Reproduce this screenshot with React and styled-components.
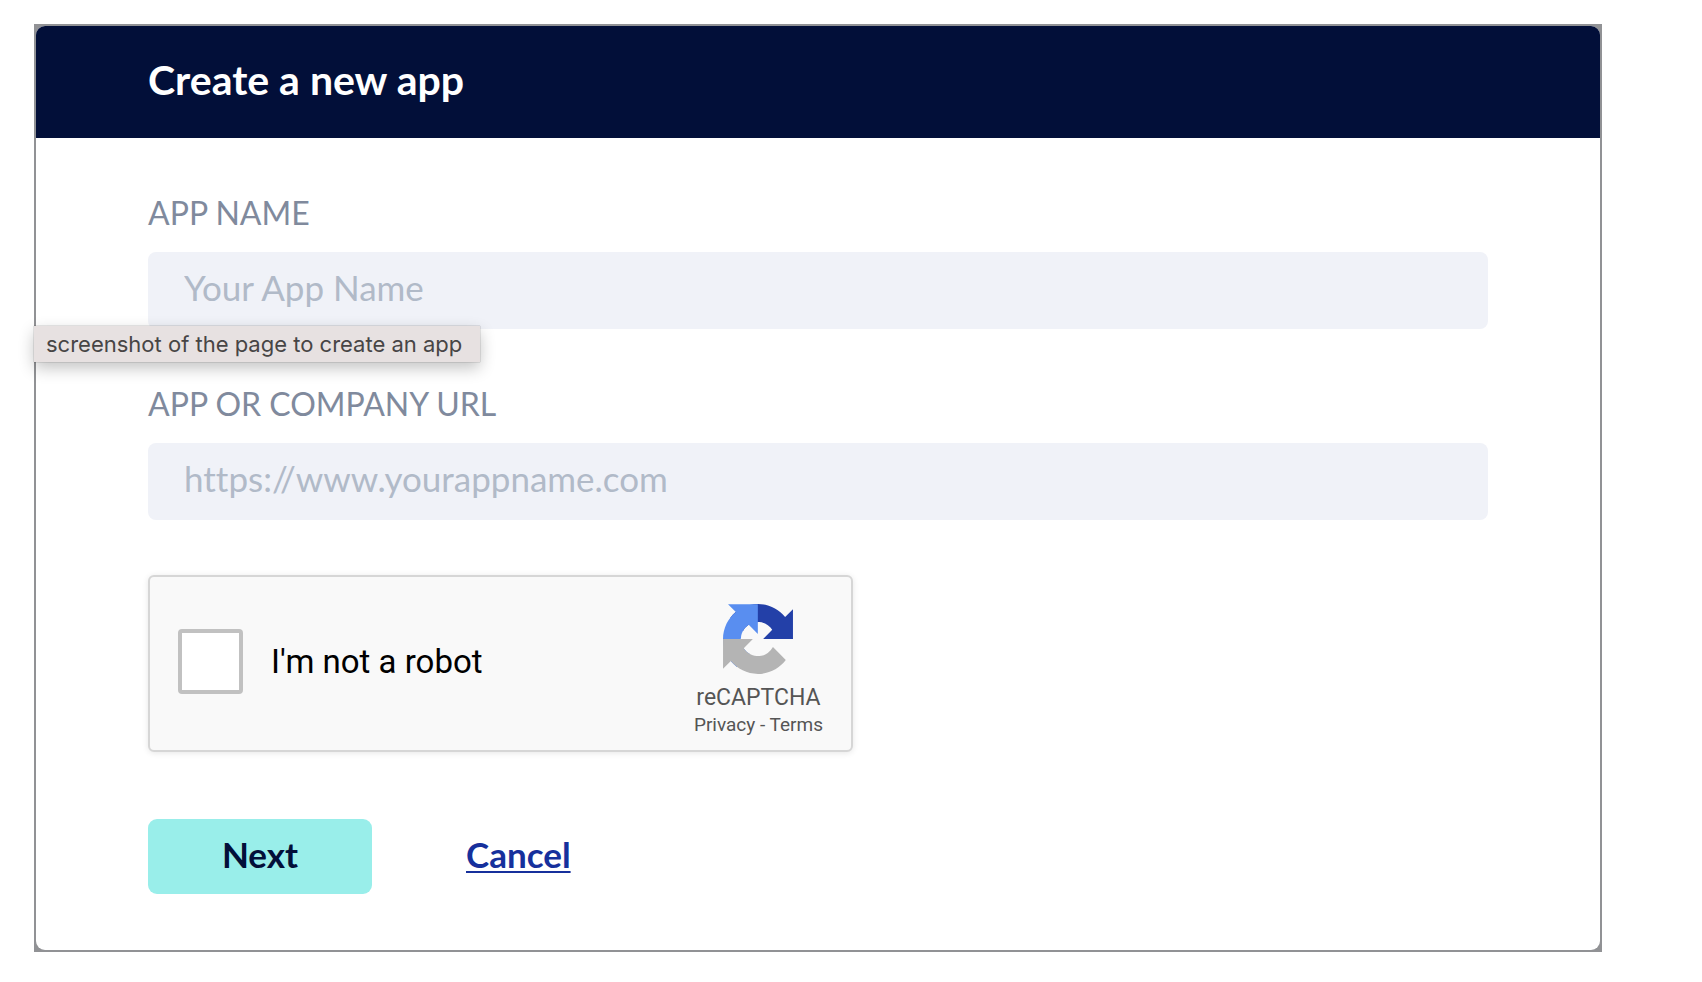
import React from "react";
import styled, { createGlobalStyle } from "styled-components";

const GlobalStyle = createGlobalStyle`
  *, *::before, *::after { box-sizing: border-box; }
  body {
    margin: 0;
    background: #fff;
    font-family: Lato, "Liberation Sans", sans-serif;
    font-variant-ligatures: none;
  }
`;

const Page = styled.main`
  padding: 24px 100px 28px 34px;
`;

const Frame = styled.div`
  position: relative;
  padding: 2px;
  background: #919295;
`;

const Card = styled.section`
  overflow: hidden;
  border-radius: 9px;
  background: #fff;
`;

const Header = styled.header`
  display: flex;
  align-items: center;
  height: 112px;
  padding: 0 112px 4px;
  background: #020f39;
`;

const Title = styled.h1`
  margin: 0;
  color: #fff;
  font-size: 41px;
  line-height: 48px;
  font-weight: 700;
`;

const Form = styled.form`
  display: flex;
  flex-direction: column;
  gap: 55px;
  padding: 55px 112px 56px;
`;

const Field = styled.div`
  display: flex;
  flex-direction: column;
  gap: 19px;
`;

const Label = styled.label`
  color: #808a9d;
  font-size: 32px;
  line-height: 40px;
  text-transform: uppercase;
`;

const TextInput = styled.input`
  width: 100%;
  height: 77px;
  padding: 0 36px 8px;
  border: 0;
  border-radius: 8px;
  background: #f0f2f8;
  color: #020f39;
  font-family: inherit;
  font-size: 35px;
  font-variant-ligatures: inherit;

  &::placeholder {
    color: #b1bac8;
    opacity: 1;
  }
`;

const Captcha = styled.div`
  display: flex;
  align-items: center;
  justify-content: space-between;
  width: 705px;
  max-width: 100%;
  height: 177px;
  padding: 0 28px 4px;
  border: 2px solid #d6d6d6;
  border-radius: 6px;
  background: #f9f9f9;
  box-shadow: 0 1px 6px rgba(0, 0, 0, 0.1);
  font-family: Roboto, "Liberation Sans", sans-serif;
`;

const CheckLabel = styled.label`
  display: flex;
  align-items: center;
  gap: 28px;
  color: #000;
  font-size: 33px;
  line-height: 40px;
`;

const Checkbox = styled.input`
  appearance: none;
  width: 65px;
  height: 65px;
  margin: 0;
  border: 4px solid #c1c1c1;
  border-radius: 4px;
  background: #fff;
`;

const Brand = styled.div`
  display: flex;
  flex-direction: column;
  align-items: center;
  padding-top: 18px;
  color: #555;
`;

const Logo = styled.svg`
  display: block;
  width: 70px;
  height: 70px;
  margin-bottom: 10px;
`;

const BrandName = styled.span`
  font-size: 23px;
  line-height: 28px;
`;

const BrandLinks = styled.span`
  font-size: 19px;
  line-height: 26px;

  a {
    color: inherit;
    text-decoration: none;
  }
`;

const Actions = styled.div`
  display: flex;
  align-items: center;
  gap: 94px;
  padding-top: 12px;
`;

const NextButton = styled.button`
  width: 224px;
  height: 75px;
  padding: 0 0 6px;
  border: 0;
  border-radius: 9px;
  background: #99eeea;
  color: #020f39;
  font-family: inherit;
  font-size: 35px;
  font-weight: 700;
`;

const CancelLink = styled.a`
  padding-bottom: 6px;
  color: #16309c;
  font-size: 35px;
  line-height: 40px;
  font-weight: 700;
  text-decoration: underline;
  text-decoration-thickness: 2px;
  text-underline-offset: 3px;
`;

const Tooltip = styled.div`
  position: absolute;
  top: 302px;
  left: 0;
  padding: 0 18px 0 12px;
  background: #e7e1e1;
  box-shadow: 0 0 1px rgba(0, 0, 0, 0.5), 0 6px 16px rgba(0, 0, 0, 0.24);
  color: #474545;
  font-family: Inter, "Liberation Sans", sans-serif;
  font-size: 22px;
  line-height: 36px;
  white-space: nowrap;
`;

function RecaptchaLogo() {
  return (
    <Logo viewBox="0 0 64 64" aria-hidden="true">
      <path
        fill="#2340a8"
        d="M64 31.955l-.033-1.37V4.687l-7.16 7.16C50.948 4.674 42.033.093 32.05.093c-10.4 0-19.622 4.96-25.458 12.64l11.736 11.86a15.55 15.55 0 0 1 4.754-5.334c2.05-1.6 4.952-2.906 8.968-2.906.485 0 .86.057 1.135.163 4.976.393 9.288 3.14 11.828 7.124l-8.307 8.307L64 31.953"
      />
      <path
        fill="#598ef0"
        d="M31.862.094l-1.37.033H4.594l7.16 7.16C4.58 13.147 0 22.06 0 32.046c0 10.4 4.96 19.622 12.64 25.458L24.5 45.768a15.55 15.55 0 0 1-5.334-4.754c-1.6-2.05-2.906-4.952-2.906-8.968 0-.485.057-.86.163-1.135.393-4.976 3.14-9.288 7.124-11.828l8.307 8.307L31.86.095"
      />
      <path
        fill="#b4b4b4"
        d="M.001 32.045l.033 1.37v25.898l7.16-7.16c5.86 7.173 14.774 11.754 24.76 11.754 10.4 0 19.622-4.96 25.458-12.64l-11.736-11.86a15.55 15.55 0 0 1-4.754 5.334c-2.05 1.6-4.952 2.906-8.968 2.906-.485 0-.86-.057-1.135-.163-4.976-.393-9.288-3.14-11.828-7.124l8.307-8.307c-10.522.04-22.4.066-27.295-.005"
      />
    </Logo>
  );
}

export default function App() {
  return (
    <>
      <GlobalStyle />
      <Page>
        <Frame>
          <Card>
            <Header>
              <Title>Create a new app</Title>
            </Header>
            <Form onSubmit={(event) => event.preventDefault()}>
              <Field>
                <Label htmlFor="app-name">App name</Label>
                <TextInput id="app-name" type="text" placeholder="Your App Name" />
              </Field>
              <Field>
                <Label htmlFor="app-url">App or company URL</Label>
                <TextInput id="app-url" type="url" placeholder="https://www.yourappname.com" />
              </Field>
              <Captcha>
                <CheckLabel>
                  <Checkbox type="checkbox" />
                  I'm not a robot
                </CheckLabel>
                <Brand>
                  <RecaptchaLogo />
                  <BrandName>reCAPTCHA</BrandName>
                  <BrandLinks>
                    <a href="#privacy">Privacy</a> - <a href="#terms">Terms</a>
                  </BrandLinks>
                </Brand>
              </Captcha>
              <Actions>
                <NextButton type="submit">Next</NextButton>
                <CancelLink href="#cancel">Cancel</CancelLink>
              </Actions>
            </Form>
          </Card>
          <Tooltip role="tooltip">screenshot of the page to create an app</Tooltip>
        </Frame>
      </Page>
    </>
  );
}
